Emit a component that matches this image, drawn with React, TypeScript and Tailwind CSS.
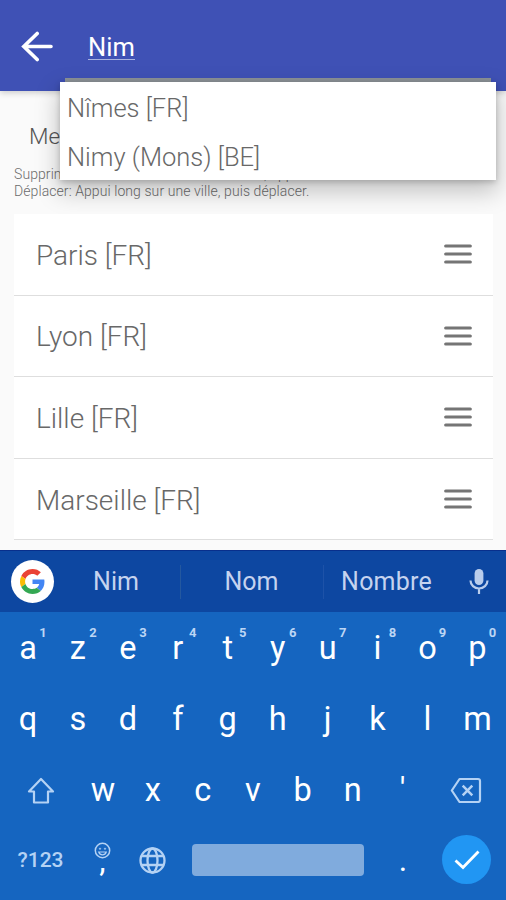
import React from "react";

const cities = ["Paris [FR]", "Lyon [FR]", "Lille [FR]", "Marseille [FR]"];
const rowOne = ["a", "z", "e", "r", "t", "y", "u", "i", "o", "p"];
const rowTwo = ["q", "s", "d", "f", "g", "h", "j", "k", "l", "m"];
const rowThree = ["w", "x", "c", "v", "b", "n", "'"];

function BackArrow() {
  return (
    <svg width="32" height="32" viewBox="0 0 32 32" fill="none" stroke="#fff" strokeWidth="3.6" strokeLinecap="round">
      <path d="M30 15.500H3.500M16.200 2.500L2.800 15.500l13.400 13" strokeLinejoin="miter" />
    </svg>
  );
}

function DragHandle() {
  return (
    <svg width="28" height="20" viewBox="0 0 28 20" stroke="#757575" strokeWidth="3.2" strokeLinecap="round">
      <path d="M1.700 2h24.600M1.700 10h24.600M1.700 18h24.600" />
    </svg>
  );
}

function GoogleBadge() {
  return (
    <div className="flex size-[43px] items-center justify-center rounded-full bg-white">
      <svg width="25" height="25" viewBox="0 0 48 48">
        <path fill="#EA4335" d="M24 9.500c3.540 0 6.710 1.220 9.210 3.600l6.850-6.850C35.900 2.380 30.470 0 24 0 14.620 0 6.510 5.380 2.560 13.220l7.980 6.190C12.430 13.720 17.740 9.500 24 9.500z" />
        <path fill="#4285F4" d="M46.980 24.550c0-1.570-.15-3.090-.38-4.550H24v9.020h12.940c-.58 2.960-2.260 5.480-4.780 7.180l7.730 6c4.510-4.180 7.090-10.360 7.090-17.650z" />
        <path fill="#FBBC05" d="M10.530 28.590c-.48-1.450-.76-2.990-.76-4.590s.27-3.140.76-4.590l-7.980-6.190C.92 16.460 0 20.120 0 24c0 3.880.92 7.540 2.560 10.780l7.970-6.190z" />
        <path fill="#34A853" d="M24 48c6.480 0 11.930-2.130 15.890-5.810l-7.730-6c-2.150 1.450-4.920 2.300-8.160 2.300-6.260 0-11.570-4.220-13.470-9.910l-7.980 6.190C6.510 42.620 14.620 48 24 48z" />
      </svg>
    </div>
  );
}

function Mic() {
  return (
    <svg width="20" height="27" viewBox="0 0 20 27" fill="none">
      <rect x="5.600" y="1" width="8.800" height="16" rx="4.400" fill="#b9cdec" />
      <path d="M1.500 12.500a8.500 8 0 0 0 17 0M10 20.500v5.500" stroke="#b9cdec" strokeWidth="2.200" />
    </svg>
  );
}

function Shift() {
  return (
    <svg width="28" height="28" viewBox="0 0 28 28" fill="none" stroke="#b4d2f4" strokeWidth="2.200" strokeLinejoin="round">
      <path d="M14 3L26 15.500h-5v11H7v-11H2z" />
    </svg>
  );
}

function Backspace() {
  return (
    <svg width="32" height="26" viewBox="0 0 32 26" fill="none" stroke="#b4d2f4" strokeWidth="2.200" strokeLinejoin="round">
      <path d="M9.500 2h18.500a2 2 0 0 1 2 2v19a2 2 0 0 1-2 2H9.500L1.800 13.500z" />
      <path d="M12.700 8.700l9.600 9.600M22.300 8.700l-9.600 9.600" strokeWidth="2.500" />
    </svg>
  );
}

function Smiley() {
  return (
    <svg width="17" height="17" viewBox="0 0 17 17" fill="none" stroke="#b4d2f4" strokeWidth="1.500">
      <circle cx="8.500" cy="8.500" r="7.200" />
      <circle cx="6" cy="6.700" r="0.700" fill="#b4d2f4" strokeWidth="0.600" />
      <circle cx="11" cy="6.700" r="0.700" fill="#b4d2f4" strokeWidth="0.600" />
      <path d="M4.700 10c1.400 3.800 6.200 3.800 7.600 0z" strokeWidth="1.200" />
    </svg>
  );
}

function Globe() {
  return (
    <svg width="27" height="27" viewBox="0 0 27 27" fill="none" stroke="#b4d2f4" strokeWidth="2.300">
      <circle cx="13.500" cy="13.500" r="12" />
      <ellipse cx="13.500" cy="13.500" rx="5" ry="12" />
      <path d="M2.500 9h22M2.500 18h22" />
    </svg>
  );
}

function Key({ label, hint }: { label: string; hint?: string }) {
  return (
    <div className="relative flex w-[49.95px] items-center justify-center text-[32.5px] leading-none text-white">
      {label}
      {hint && (
        <span className="absolute left-[36px] top-[12px] w-[8px] text-center text-[13px] font-bold leading-[16px] text-[#bcd6f5]">{hint}</span>
      )}
    </div>
  );
}

export default function App() {
  return (
    <div className="flex h-[900px] w-[506px] flex-col overflow-hidden bg-[#fafafa] font-[Roboto,sans-serif]">
      <header className="relative z-10 flex h-[90.500px] shrink-0 items-center bg-[#3f51b5] pl-[21px] pt-[4px] shadow-[0_2px_6px_rgba(0,0,0,0.18)]">
        <BackArrow />
        <div className="ml-[35px] mt-[1px] border-b-[1.500px] border-[#a9b2df] text-[25.5px] leading-[24px] text-white">Nim</div>
        <div className="absolute left-[65px] top-[78px] h-[4px] w-[426px] bg-[#8c9297]" />
        <div className="absolute left-[59.500px] top-[82px] flex h-[98px] w-[436.500px] flex-col bg-white pl-[7.500px] pt-[2px] text-[25.5px] font-light text-[#686868] shadow-[0_10px_22px_2px_rgba(0,0,0,0.22),0_2px_6px_rgba(0,0,0,0.2)]">
          <div className="h-[49px] leading-[49px]">Nîmes [FR]</div>
          <div className="h-[47px] leading-[49px]">Nimy (Mons) [BE]</div>
        </div>
      </header>

      <main className="flex h-[459.500px] shrink-0 flex-col overflow-hidden px-[14px]">
        <div className="h-[75.500px] pl-[15px] pt-[31px] text-[22.5px] font-light leading-[28px] text-[#555]">Me</div>
        <div className="h-[48px] whitespace-nowrap text-[14px] font-light leading-[16.500px] tracking-[0.08px] text-[#6c6c6c]">
          <div>Supprimer: Glisser une ville vers la droite, appui</div>
          <div>Déplacer: Appui long sur une ville, puis déplacer.</div>
        </div>
        <ul className="relative z-20 flex w-[479px] shrink-0 flex-col">
          {cities.map((city) => (
            <li key={city} className="flex h-[81.600px] items-center justify-between border-b-[1.500px] border-[#dedede] bg-white pl-[22px] pr-[21.500px]">
              <span className="pt-[3px] text-[28px] font-light leading-[34px] text-[#686868]">{city}</span>
              <DragHandle />
            </li>
          ))}
        </ul>
      </main>

      <section className="flex h-[350px] shrink-0 flex-col bg-[#1565c0]">
        <div className="flex h-[62px] items-center border-t border-[#082f8c] bg-[#0d47a1] pl-[11px] text-[25px] text-[#c5d3ef]">
          <GoogleBadge />
          <div className="w-[126px] pr-[2px] pt-[1px] text-center">Nim</div>
          <div className="h-[34px] w-px bg-[#24589f]" />
          <div className="w-[142px] pr-[1px] pt-[1px] text-center">Nom</div>
          <div className="h-[34px] w-px bg-[#1d52a8]" />
          <div className="w-[125px] pt-[1px] text-center tracking-[0.2px]">Nombre</div>
          <div className="ml-[20px]"><Mic /></div>
        </div>
        <div className="flex h-[71px] pl-[3px] pt-px">
          {rowOne.map((k, i) => <Key key={k} label={k} hint={String((i + 1) % 10)} />)}
        </div>
        <div className="flex h-[71px] pl-[3px] pt-px">
          {rowTwo.map((k) => <Key key={k} label={k} />)}
        </div>
        <div className="flex h-[71px] pl-[3px] pt-px">
          <div className="flex w-[75px] items-center justify-center"><Shift /></div>
          {rowThree.map((k) => <Key key={k} label={k} />)}
          <div className="flex w-[76px] items-center justify-center"><Backspace /></div>
        </div>
        <div className="flex h-[70px] items-center pl-[3px]">
          <div className="w-[75px] pt-[2px] text-center text-[21px] font-medium text-[#b4d2f4]">?123</div>
          <div className="flex w-[49px] flex-col items-center text-white">
            <Smiley />
            <span className="h-[20px] text-[32px] leading-[3px]">,</span>
          </div>
          <div className="flex w-[50px] justify-center"><Globe /></div>
          <div className="ml-[14.500px] h-[32px] w-[172.500px] rounded-[4px] bg-[#80abdd]" />
          <div className="w-[78px] text-center text-[32px] leading-[50px] text-white">.</div>
          <div className="-mt-[1px] flex size-[49px] items-center justify-center rounded-full bg-[#2196f3]">
            <svg width="26" height="20" viewBox="0 0 26 20" fill="none" stroke="#fff" strokeWidth="2.800">
              <path d="M1.500 10.500l7.500 7L24.500 1.500" />
            </svg>
          </div>
        </div>
      </section>
    </div>
  );
}
